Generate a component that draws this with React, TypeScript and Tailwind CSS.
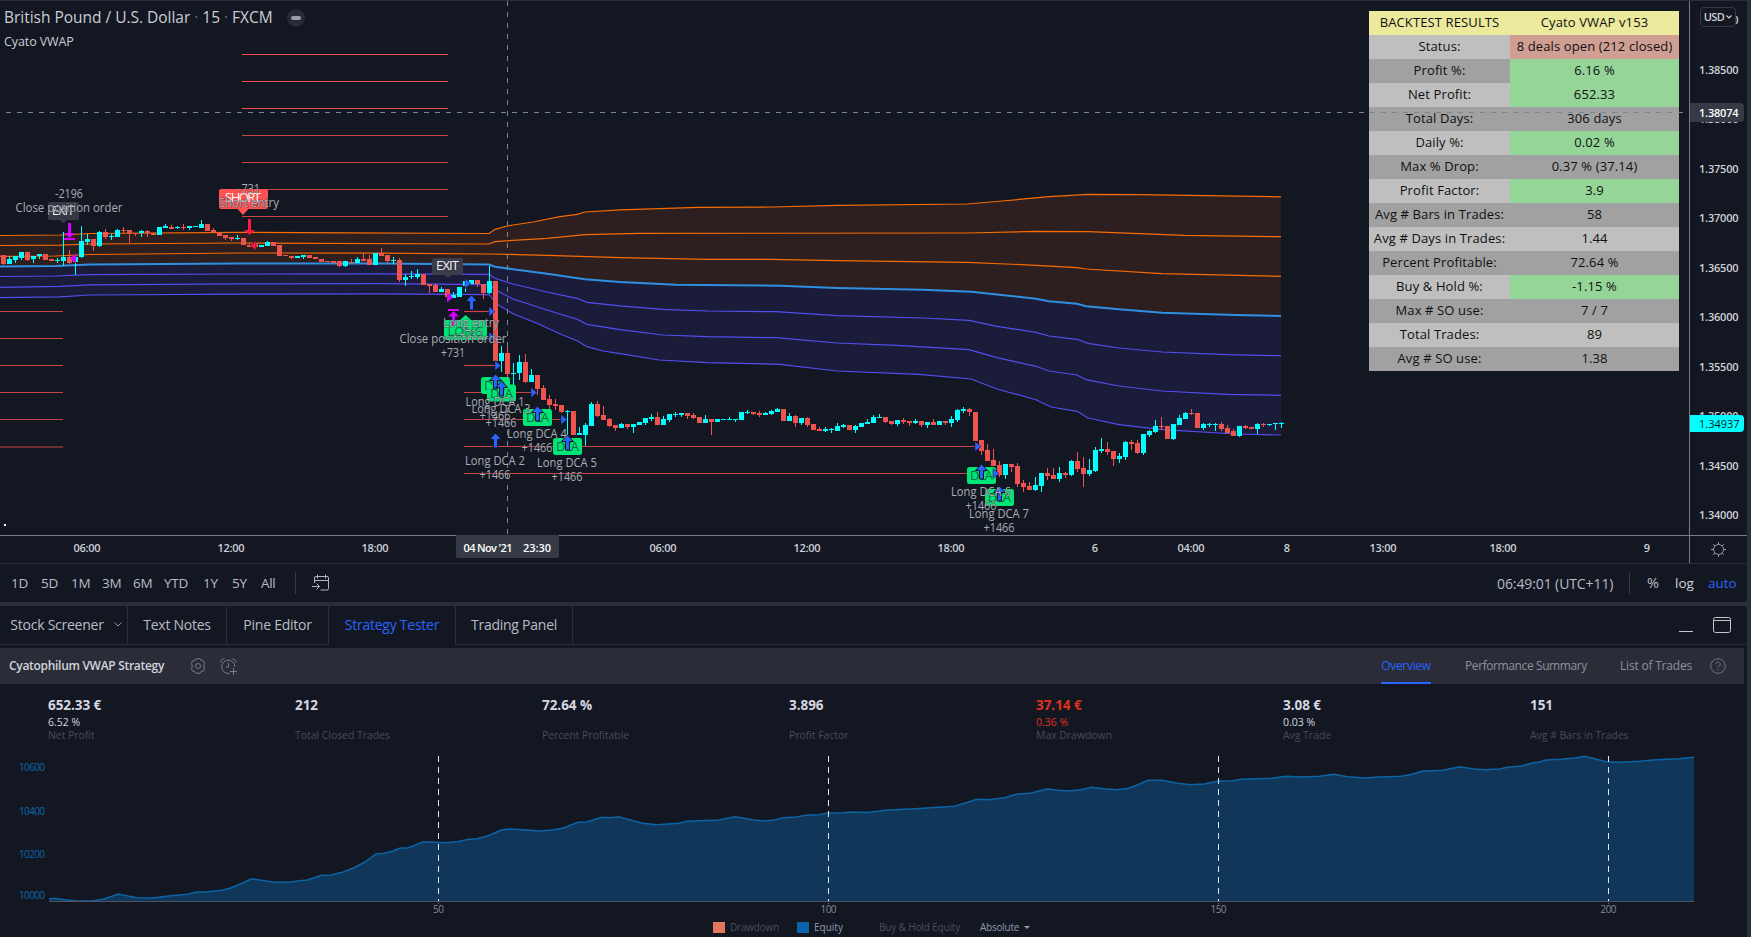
import type { ReactNode } from "react";
import clsx from "clsx";

type Point = [number, number];

/* One entry per 15m bar: direction, body top, body bottom, high, low (0 = same as the body) */
const CANDLES = `
r255,264,0,265 g259,264,256,0 g256,260,0,263 g252,258,0,260 r252,260,0,261 g256,259,0,263 g254,256,0,259 r254,260,0,0
r259,261,0,0 g260,261,258,263 g257,261,232,266 r257,263,250,264 g257,262,0,275 g241,257,226,258 g239,242,234,245 r239,246,0,251
g232,246,231,247 r232,237,229,239 g236,237,234,240 g230,237,229,0 r230,231,227,233 r230,233,0,243 r233,234,0,236 g231,233,230,237
r231,233,230,237 r233,235,0,0 g227,235,0,0 g226,228,224,0 r227,229,225,0 g227,228,226,229 r227,228,224,230 g226,228,0,230
g226,227,0,0 g224,228,220,0 r224,231,0,0 r230,232,228,0 r232,236,0,0 r235,238,0,240 r237,239,0,241 g238,239,235,240
r238,245,0,0 r245,247,243,0 r243,247,0,0 g245,247,0,0 g242,246,241,0 r242,246,0,0 r245,256,0,0 r255,256,0,0
r256,258,0,259 g256,258,0,0 g255,257,0,259 r255,258,0,0 r257,259,0,0 r259,262,0,0 r261,262,0,0 r261,263,0,0
r261,266,0,267 g261,266,0,267 r262,263,259,0 g259,263,257,0 r259,261,253,0 r259,265,255,0 g253,265,0,0 r253,256,248,0
r255,261,0,263 g260,261,257,264 r260,280,258,282 g277,280,274,286 g276,277,271,279 g274,277,269,279 r274,285,0,0 r284,286,0,293
r285,292,283,0 g289,292,287,0 r289,297,0,299 g295,298,292,0 g287,297,0,0 g281,286,0,292 g280,284,0,0 r280,284,0,287
r284,293,0,299 g281,293,266,294 r281,361,0,0 g353,361,346,372 r353,374,347,378 g373,374,363,385 g362,373,355,380 r362,382,354,383
g375,382,369,0 r375,389,0,395 r388,400,385,0 r399,405,395,417 r404,406,399,410 r405,412,0,413 g411,412,410,440 r411,435,0,0
g433,435,427,0 g425,435,423,446 g404,426,402,0 r404,416,401,417 r415,420,406,0 r419,426,418,427 r425,428,0,431 g424,428,423,0
r424,427,0,429 g424,427,0,433 g422,425,0,0 g418,423,0,425 g417,419,414,421 r417,425,412,0 g419,425,416,0 g414,420,0,422
g414,415,412,417 g413,415,0,417 r413,416,0,419 r415,418,413,419 r417,423,0,0 g419,423,415,0 r419,422,0,435 g419,422,0,0
g419,420,0,0 g419,420,417,0 g419,420,0,422 g412,420,0,0 g412,413,410,414 r412,414,0,415 r413,415,411,417 g413,415,412,0
g411,414,410,415 g409,412,408,0 r409,421,0,0 g416,421,413,0 r416,423,415,427 g418,423,0,425 r418,425,417,427 r424,430,0,0
r429,431,427,0 g429,431,427,432 g429,430,428,433 g426,431,423,0 g425,427,424,428 r425,430,0,0 g426,430,425,433 g423,427,0,0
g422,424,419,0 g417,423,415,0 g417,418,414,0 r417,422,0,423 r421,424,0,425 g420,424,0,426 r420,422,418,424 r421,423,0,426
g421,423,419,424 r421,425,0,427 g422,425,0,428 r422,425,419,0 g421,425,0,0 r421,423,0,425 g419,423,416,427 g410,420,409,422
g409,411,407,413 r409,412,408,416 r412,441,0,0 r440,451,0,455 r450,461,444,0 r460,466,449,0 r465,475,461,477 g464,475,0,479
r464,467,0,472 r466,484,463,487 r483,487,480,492 r486,490,482,0 g485,490,477,491 g473,486,0,492 r473,476,468,480 r475,479,468,0
g473,479,467,482 r473,475,472,478 g461,475,460,476 r461,469,452,472 r468,474,457,487 g470,474,459,476 g450,471,447,472 g449,451,438,453
r449,452,442,455 r451,459,0,466 g456,459,453,463 g442,457,441,460 r442,444,440,450 r443,453,440,454 g434,453,0,455 g431,435,430,437
g426,432,420,433 r426,427,417,430 r426,439,0,0 g424,439,0,440 g418,425,415,0 g413,419,412,0 r413,414,409,415 r413,428,0,0
g424,428,423,430 g424,425,423,427 g424,425,423,431 r424,429,422,431 r428,433,425,0 r431,436,429,0 g426,436,0,437 r426,428,425,429
r427,429,0,0 g424,429,423,434 r424,425,423,427 g424,425,0,426 g423,424,0,430 g423,424,422,428
`
  .trim()
  .split(/\s+/)
  .map((c) => {
    const [top, bottom, high, low] = c.slice(1).split(",").map(Number);
    return { up: c[0] === "g", top, bottom, high: high || top, low: low || bottom };
  });

const UPPER_3: Point[] = [[0, 235.5], [60, 235], [90, 233.5], [235, 232.3], [350, 232.8], [489, 233.5], [495, 229.3], [507, 226], [513, 225], [533, 222], [560, 216.7], [577, 214.3], [585, 212], [620, 209.8], [698, 207.4], [772, 207], [837, 205.3], [967, 204], [1002, 201], [1049, 196.7], [1088, 194.4], [1140, 194.6], [1281, 196.8]];
const UPPER_2: Point[] = [[0, 245.5], [60, 245.2], [90, 244], [240, 243], [489, 244], [495, 241.7], [513, 240.3], [547, 238.3], [585, 234.7], [640, 233.4], [967, 233], [1036, 231.4], [1088, 231.7], [1184, 235.3], [1281, 236.7]];
const UPPER_1: Point[] = [[0, 256.3], [55, 256], [90, 254.5], [240, 253], [380, 253.2], [489, 254], [547, 255.3], [620, 257.7], [707, 259.3], [772, 259.4], [837, 260.7], [967, 262.3], [1036, 265.3], [1077, 267.7], [1086, 269], [1162, 273.7], [1281, 276.3]];
const VWAP: Point[] = [[0, 266.4], [55, 266], [90, 264.5], [240, 263.5], [380, 263.4], [489, 264.6], [495, 266.7], [513, 269.3], [547, 273.7], [585, 279.3], [620, 282], [676, 284.7], [780, 285.7], [837, 288], [923, 289.7], [971, 291.7], [1036, 298.7], [1049, 301.3], [1077, 303.7], [1086, 306.3], [1119, 309.3], [1162, 312.7], [1236, 315], [1281, 316]];
const LOWER_1: Point[] = [[0, 276.5], [55, 276], [90, 274.6], [240, 274], [380, 273.8], [489, 274.4], [495, 278.3], [513, 284], [547, 292], [577, 298.3], [587, 302.3], [620, 305.8], [663, 309.3], [707, 311], [776, 311.7], [837, 315.7], [923, 318], [969, 320.3], [997, 326.3], [1036, 332.3], [1049, 336], [1077, 339.3], [1088, 343.3], [1119, 348], [1162, 352], [1227, 354.7], [1281, 355.7]];
const LOWER_2: Point[] = [[0, 287.3], [60, 286.3], [90, 284.8], [240, 283.8], [380, 283.6], [489, 284.7], [497, 290.7], [513, 299], [547, 310], [577, 319.3], [587, 324.3], [620, 329.7], [663, 335], [707, 336.7], [776, 337.7], [837, 343], [897, 345.3], [969, 349.7], [997, 357.7], [1036, 366.3], [1049, 371], [1077, 375], [1086, 379.7], [1119, 386], [1162, 391], [1227, 394.3], [1281, 395.3]];
const LOWER_3: Point[] = [[0, 297.6], [60, 296.8], [90, 295], [240, 294.2], [380, 293.8], [489, 294.7], [497, 304], [513, 313.7], [537, 323.3], [562, 334.7], [577, 340.7], [587, 346.7], [603, 351], [620, 353.7], [659, 360], [707, 362.7], [780, 364.3], [837, 371], [919, 374.3], [971, 379], [997, 389], [1036, 399.7], [1051, 407], [1077, 411.3], [1088, 418], [1119, 424.7], [1162, 429.7], [1236, 434], [1281, 435]];

/* Safety order levels: x1, x2, y */
const LEVELS: [number, number, number][] = [
  ...[54.5, 81.5, 108.5, 135.5, 162.5, 189.5, 216.5].map((y): [number, number, number] => [242, 448, y]),
  ...[311.5, 338.5, 365.5, 392.5, 419.5, 447].map((y): [number, number, number] => [0, 63, y]),
  [464, 490, 311.5], [464, 489, 338.5], [464, 496, 365.5], [464, 532, 392.5],
  [464, 562, 419.5], [464, 976, 446.5], [464, 994, 473.5],
];

const DCA_BOXES: Point[] = [[481, 377], [487, 384.5], [523, 409], [553, 438], [967, 467], [985, 489]];
const BUY_ARROWS: Point[] = [[471.5, 295], [495.5, 374], [501.5, 381], [495.5, 433], [537.5, 406], [567.5, 435], [981.5, 464], [999.5, 486]];
const FILLS: Point[] = [[465, 283.5], [489, 311.5], [489, 337], [495, 365.5], [531, 392.5], [561, 419.5], [975, 446.5], [993, 473.5]];

/* text, centre x, baseline, width */
const NOTES: [string, number, number, number][] = [
  ["-2196", 69, 198, 28], ["Close position order", 69, 212, 107],
  ["-731", 249, 193, 22], ["Short entry", 249, 207, 60],
  ["Long entry", 471, 327, 56], ["+732", 471, 339, 24],
  ["Close position order", 453, 343, 107], ["+731", 453, 357, 24],
  ["Long DCA 1", 495, 406, 59], ["+1466", 495, 420, 31],
  ["Long DCA 3", 501, 413, 59], ["+1466", 501, 427, 31],
  ["Long DCA 4", 537, 438, 60], ["+1466", 537, 452, 31],
  ["Long DCA 2", 495, 465, 60], ["+1466", 495, 479, 31],
  ["Long DCA 5", 567, 467, 60], ["+1466", 567, 481, 31],
  ["Long DCA 6", 981, 496, 60], ["+1466", 981, 510, 31],
  ["Long DCA 7", 999, 518, 60], ["+1466", 999, 532, 31],
];

const RESULTS: [string, string, string, string][] = [
  ["BACKTEST RESULTS", "Cyato VWAP v153", "bg-[#ebe99b]", "bg-[#ebe99b]"],
  ["Status:", "8 deals open (212 closed)", "bg-[#bfbfbf]", "bg-[#d09f94]"],
  ["Profit %:", "6.16 %", "bg-[#a1a1a1]", "bg-[#95d598]"],
  ["Net Profit:", "652.33", "bg-[#bfbfbf]", "bg-[#95d598]"],
  ["Total Days:", "306 days", "bg-[#a1a1a1]", "bg-[#a1a1a1]"],
  ["Daily %:", "0.02 %", "bg-[#bfbfbf]", "bg-[#95d598]"],
  ["Max % Drop:", "0.37 % (37.14)", "bg-[#a1a1a1]", "bg-[#a1a1a1]"],
  ["Profit Factor:", "3.9", "bg-[#bfbfbf]", "bg-[#95d598]"],
  ["Avg # Bars in Trades:", "58", "bg-[#a1a1a1]", "bg-[#a1a1a1]"],
  ["Avg # Days in Trades:", "1.44", "bg-[#bfbfbf]", "bg-[#bfbfbf]"],
  ["Percent Profitable:", "72.64 %", "bg-[#a1a1a1]", "bg-[#a1a1a1]"],
  ["Buy & Hold %:", "-1.15 %", "bg-[#bfbfbf]", "bg-[#95d598]"],
  ["Max # SO use:", "7 / 7", "bg-[#a1a1a1]", "bg-[#a1a1a1]"],
  ["Total Trades:", "89", "bg-[#bfbfbf]", "bg-[#bfbfbf]"],
  ["Avg # SO use:", "1.38", "bg-[#a1a1a1]", "bg-[#a1a1a1]"],
];

const PRICES = ["1.39000", "1.38500", "1.38000", "1.37500", "1.37000", "1.36500", "1.36000", "1.35500", "1.35000", "1.34500", "1.34000"];
const TIMES: [string, number][] = [["06:00", 87], ["12:00", 231], ["18:00", 375], ["06:00", 663], ["12:00", 807], ["18:00", 951], ["6", 1095], ["04:00", 1191], ["8", 1287], ["13:00", 1383], ["18:00", 1503], ["9", 1647]];

const RANGES: [string, string][] = [["1D", "w-[30px]"], ["5D", "w-[30px]"], ["1M", "w-[31px]"], ["3M", "w-[31px]"], ["6M", "w-[31px]"], ["YTD", "w-[39px]"], ["1Y", "w-[29px]"], ["5Y", "w-[29px]"], ["All", "w-[33px]"]];

const STATS = [
  { value: "652.33 €", sub: "6.52 %", label: "Net Profit" },
  { value: "212", label: "Total Closed Trades" },
  { value: "72.64 %", label: "Percent Profitable" },
  { value: "3.896", label: "Profit Factor" },
  { value: "37.14 €", sub: "0.36 %", label: "Max Drawdown", loss: true },
  { value: "3.08 €", sub: "0.03 %", label: "Avg Trade" },
  { value: "151", label: "Avg # Bars in Trades" },
];

/* Equity curve in panel coordinates, origin at the panel's top left */
const EQUITY: Point[] = [
  [49, 158.7], [55, 158.3], [64.5, 159.7], [76, 161], [92.6, 161], [104, 159], [112, 156.3], [118.5, 154], [128, 156], [137.5, 157.7], [150.4, 158], [159, 157.3], [168, 156], [188, 154.3], [196.5, 152], [205, 152], [221.7, 150.3], [230, 148.3], [241, 143.7], [251.5, 138.7], [264, 140.7], [275, 142.3], [289, 142.3], [297.5, 141], [307.5, 140], [321.6, 135.3], [331, 135], [342.4, 132.3], [353.6, 128], [365, 122], [376, 114], [384.4, 113.3], [393, 111], [399.6, 108.3], [408, 107.7], [415.3, 105], [422.6, 102], [432, 102], [446.2, 102.7], [457.4, 101.7], [468.6, 99.3], [477, 98.7], [488.3, 95.7], [501.2, 90], [509, 89], [527.6, 90], [538.8, 91], [552.8, 90], [564, 87.7], [578, 82.3], [586.5, 82], [601.6, 77.3], [610.6, 77.7], [618.5, 76.7], [631.4, 80.3], [642.6, 83.3], [656.6, 84.7], [679, 83.3], [687.5, 81.3], [718.4, 80], [735.2, 76.7], [752, 79.7], [763.3, 81], [774.5, 80], [783, 77.7], [797, 77], [805.4, 75.3], [819.4, 74.7], [828, 73], [842, 72.7], [853, 72], [867, 72.4], [880, 71], [884, 70.3], [915, 68.7], [954.3, 66.3], [965.5, 63], [976.8, 59.3], [988, 59.7], [1004.8, 57.7], [1016, 54.3], [1030, 53.3], [1047, 49], [1058.2, 50.3], [1069.5, 51], [1080.7, 49.7], [1092, 47.3], [1103.2, 48.7], [1117.2, 49.7], [1128.5, 48.3], [1139.7, 44], [1148, 40.3], [1162.2, 40.3], [1176.2, 43], [1190.3, 44.7], [1204.3, 44], [1218.4, 41], [1232.4, 40.7], [1241, 39.3], [1271.7, 38.3], [1285.8, 36.3], [1302.6, 37], [1319.5, 36.3], [1333.5, 34.3], [1347.6, 36.7], [1364.4, 38], [1378.5, 37], [1401, 36.3], [1412.2, 34.3], [1421.7, 31.3], [1443, 30.3], [1460, 26.7], [1474, 29], [1485.2, 29.7], [1499.3, 29], [1507.7, 27.3], [1521.8, 26], [1532, 23], [1538.6, 22.3], [1546, 20], [1561, 19.3], [1575, 18], [1584.7, 16.3], [1594.8, 18.7], [1606, 21.7], [1620, 22.3], [1639.8, 21.3], [1656.6, 19.7], [1679, 18.7], [1694, 17.3],
];

const line = (pts: Point[]) => "M" + pts.map((p) => p.join(" ")).join("L");
const area = (a: Point[], b: Point[]) => line([...a, ...[...b].reverse()]) + "Z";

function BuyArrow({ x, y }: { x: number; y: number }) {
  return <path d={`M${x} ${y}l6 6.500h-4v8.500h-4v-8.500h-4z`} fill="#2962ff" stroke="#131722" strokeWidth="1" />;
}

function PriceChart() {
  return (
    <svg width="1689" height="535" className="absolute left-0 top-0 block">
      <path d={area(UPPER_3, VWAP)} fill="#2d1f20" />
      <path d={area(VWAP, LOWER_3)} fill="#1a1c39" />
      {[UPPER_3, UPPER_2, UPPER_1].map((b, i) => <path key={i} d={line(b)} fill="none" stroke="#f56b04" strokeWidth="1.2" />)}
      {[LOWER_1, LOWER_2, LOWER_3].map((b, i) => <path key={i} d={line(b)} fill="none" stroke="#534ef0" strokeWidth="1.2" />)}
      <path d={line(VWAP)} fill="none" stroke="#2f8fe0" strokeWidth="2" />

      {/* Crosshair, vertical */}
      <path d="M507.5 1V535" stroke="#758696" strokeDasharray="5 6" />

      {CANDLES.map((c, i) => (
        <g key={i} fill={c.up ? "#00ffff" : "#ef5350"} shapeRendering="crispEdges">
          <rect x={3 + i * 6} y={c.high} width="1" height={c.low - c.high} />
          <rect x={1 + i * 6} y={c.top} width="5" height={c.bottom - c.top} />
        </g>
      ))}

      {LEVELS.map(([x1, x2, y], i) => <path key={i} d={`M${x1} ${y}H${x2}`} stroke={i < 3 ? "#f24e4e" : "#c94448"} strokeWidth="1.2" />)}

      {/* Short entry */}
      <rect x="219" y="189" width="49" height="20" rx="2" fill="#ff5252" />
      <path d="M237 208.500H249L243 215Z" fill="#ff5252" />
      <text x="243" y="202" fontSize="13" fontWeight="500" textAnchor="middle" textLength="36" fill="#fff">SHORT</text>
      <path d="M248 219h3v11h4l-5.500 5l-5.500-5h4z" fill="#ff1744" />
      <path d="M250 245.500l6-5v10z" fill="#ff1744" stroke="#131722" strokeWidth="0.5" />

      {/* Position exits */}
      <rect x="48" y="202" width="31" height="18" rx="2" fill="#363a45" />
      <path d="M59 219.500H68L63.500 223Z" fill="#363a45" />
      <text x="63" y="215" fontSize="12" textAnchor="middle" textLength="22" fill="#fff">EXIT</text>
      <path d="M68 223h3v10h4l-5.500 5l-5.500-5h4zM64 238h11v2h-11z" fill="#d500f9" />
      <path d="M70 258.500l6-5v10z" fill="#d500f9" />
      <rect x="432" y="258" width="31" height="17" rx="2" fill="#3b3c4a" />
      <path d="M443 274.500H452L447.500 278Z" fill="#3b3c4a" />
      <text x="447.500" y="270" fontSize="13" fontWeight="500" textAnchor="middle" textLength="23" fill="#f0f0f3">EXIT</text>
      <path d="M453 297.500l-6-5v10z" fill="#d500f9" />

      {/* Long entry */}
      <path d="M444 322a2 2 0 0 1 2-2h14l5.500-5l5.500 5h14a2 2 0 0 1 2 2v16a2 2 0 0 1-2 2h-39a2 2 0 0 1-2-2z" fill="#00e676" />
      <text x="465.500" y="335.500" fontSize="13" textAnchor="middle" textLength="36" fill="#0b7a4c">LONG</text>
      <path d="M448 309h11v2h-11zM453.500 311l5.500 5.500h-4v9.500h-3v-9.500h-4z" fill="#d500f9" />

      {DCA_BOXES.map(([x, y]) => (
        <g key={x}>
          <rect x={x} y={y} width="29" height="17" rx="2.500" fill="#00e676" />
          <text x={x + 14.5} y={y + 13} fontSize="13" textAnchor="middle" textLength="23" fill="#086b42">DCA</text>
        </g>
      ))}
      {FILLS.map(([x, y]) => <path key={`${x}-${y}`} d={`M${x} ${y - 5}v10l6-5z`} fill="#2962ff" stroke="#131722" strokeWidth="0.5" />)}
      {BUY_ARROWS.map(([x, y]) => <BuyArrow key={`${x}-${y}`} x={x} y={y} />)}

      {NOTES.map(([t, x, y, w], i) => (
        <text key={i} x={x} y={y} fontSize="12.500" fontWeight="500" textAnchor="middle" textLength={w} lengthAdjust="spacingAndGlyphs" fill="#abaeb6" stroke="#131722" strokeOpacity="0.45" strokeWidth="1.200" paintOrder="stroke">{t}</text>
      ))}
      <rect x="4" y="524" width="2" height="2" fill="#fff" />
    </svg>
  );
}

function ResultsTable() {
  return (
    <div className="absolute left-[1369px] top-[11px] w-[310px] text-[13px] leading-[22px] tracking-[0.12px] text-[#101010]">
      {RESULTS.map(([name, value, nameBg, valueBg]) => (
        <div key={name} className="flex h-6 text-center whitespace-nowrap">
          <div className={clsx("w-[141px]", nameBg)}>{name}</div>
          <div className={clsx("w-[169px]", valueBg)}>{value}</div>
        </div>
      ))}
    </div>
  );
}

function PriceAxis() {
  return (
    <div className="relative h-[535px] w-[58px] overflow-hidden border-l border-[#787b86] text-[11px] font-semibold text-[#cfd1d6]">
      <div className="-mt-[4.5px] flex flex-col pl-[9px]">
        {PRICES.map((p) => <div key={p} className="flex h-[49.5px] items-center tracking-[-0.2px]">{p}</div>)}
      </div>
      <div className="absolute left-[10px] top-[7px] flex h-5 w-9 items-center justify-center gap-[2px] rounded border border-[#363a45] bg-[#131722] text-[11px]">
        <span className="tracking-[-0.6px]">USD</span>
        <svg width="6" height="4" viewBox="0 0 6 4" fill="none" stroke="#d1d4dc" strokeWidth="1.2"><path d="M.5.500L3 3L5.500.500" /></svg>
      </div>
      <div className="absolute left-0 top-[103px] h-[19px] w-[54px] rounded-r-sm bg-[#363a45] pl-[9px] leading-[19px] tracking-[-0.2px] text-white">1.38074</div>
      <div className="absolute left-0 top-[415px] h-[17px] w-[54px] rounded-r-sm bg-[#00ffff] pl-[9px] font-normal leading-[17px] text-[#131722]">1.34937</div>
    </div>
  );
}

function TimeAxis() {
  return (
    <div className="flex h-[29px] border-y border-t-[#787b86] border-b-[#2a2e39]">
      <svg width="1689" height="27" className="block shrink-0 overflow-visible" fontSize="11" fontWeight="600" textAnchor="middle">
        {TIMES.map(([t, x]) => <text key={x} x={x} y="15.500" fill="#cfd1d6" textLength={t.length > 1 ? 27 : undefined}>{t}</text>)}
        <path d="M456 -1H559V20a2 2 0 0 1-2 2H458a2 2 0 0 1-2-2Z" fill="#363a45" />
        <text x="488" y="15.500" fill="#fff" textLength="49">04 Nov '21</text>
        <text x="537" y="15.500" fill="#fff" textLength="28">23:30</text>
      </svg>
      <div className="flex w-[58px] items-center justify-center border-l border-[#787b86]">
        <svg width="15" height="15" viewBox="0 0 15 15" fill="none" stroke="#9598a1">
          <circle cx="7.500" cy="7.500" r="5" />
          <path d="M7.500 0v2.500M7.500 12.500V15M0 7.500h2.500M12.500 7.500H15M2.200 2.200L4 4M11 11l1.800 1.800M12.800 2.200L11 4M4 11l-1.800 1.800" />
        </svg>
      </div>
    </div>
  );
}

function RangeBar() {
  return (
    <div className="flex h-[38px] items-center rounded-br bg-[#131722] pl-[11px] text-[13.5px] text-[#b9bcc4]">
      {RANGES.map(([r, w]) => <span key={r} className={clsx("tracking-[-0.3px]", w)}>{r}</span>)}
      <div className="ml-[1px] h-[22px] w-px bg-[#363a45]" />
      <svg width="18" height="18" viewBox="0 0 18 18" fill="none" stroke="#b2b5be" className="ml-4">
        <path d="M2.500 9V4a1.500 1.500 0 0 1 1.500-1.500h11A1.500 1.500 0 0 1 16.500 4v10.500A1.500 1.500 0 0 1 15 16H8.500M2.500 6.500h14M5.500.500v4M13.500.500v4M0 12.500h7.500M4.500 9.500l3 3l-3 3" />
      </svg>
      <div className="ml-auto flex items-center pr-[11px]">
        <span className="w-[132px] text-[14px] tracking-[-0.1px]">06:49:01 (UTC+11)</span>
        <div className="mr-[17px] h-[22px] w-px bg-[#363a45]" />
        <span className="w-[28px] text-[14.5px]">%</span>
        <span className="w-[33px] text-[#d1d4dc]">log</span>
        <span className="w-[28px] text-[#2962ff]">auto</span>
      </div>
    </div>
  );
}

function Tab({ children, width, active }: { children: ReactNode; width: string; active?: boolean }) {
  return (
    <div className={clsx("flex h-full items-center justify-center whitespace-nowrap border-r border-[#2a2e39] pb-[2px]", width, active ? "text-[#2962ff]" : "border-b text-[#b9bcc4]")}>
      {children}
    </div>
  );
}

function PanelTabs() {
  return (
    <div className="flex h-[39px] rounded-tr bg-[#131722] text-[14px] tracking-[-0.25px]">
      <Tab width="w-[128px]">
        <span className="ml-[5px]">Stock Screener</span>
        <svg width="8" height="5" viewBox="0 0 8 5" fill="none" stroke="#9598a1" className="ml-[10px]"><path d="M.500.500L4 4L7.500.500" /></svg>
      </Tab>
      <Tab width="w-[99px]">Text Notes</Tab>
      <Tab width="w-[102px]">Pine Editor</Tab>
      <Tab width="w-[127px]" active>Strategy Tester</Tab>
      <Tab width="w-[117px]">Trading Panel</Tab>
      <div className="flex flex-1 items-center justify-end border-b border-[#2a2e39] pr-[15px]">
        <svg width="54" height="18" viewBox="0 0 54 18" fill="none" stroke="#c3c5cb">
          <path d="M1 15.500H15" />
          <rect x="35.500" y="1.500" width="17" height="15" rx="2" />
          <path d="M35.500 4.500h17" />
        </svg>
      </div>
    </div>
  );
}

function StrategyBar() {
  return (
    <div className="mr-[3px] flex h-9 items-center bg-[#2a2d38] text-[12px] text-[#8b919e]">
      <span className="w-[182px] pl-[9px] font-semibold tracking-[-0.3px] text-[#d1d4dc]">Cyatophilum VWAP Strategy</span>
      <svg width="16" height="16" viewBox="0 0 16 16" fill="none" stroke="#787b86" className="ml-2">
        <path d="M5.800.8h4.400l1 1.700l2 .2l1.500 2.800l-.9 1.500v2l.9 1.500l-1.500 2.800l-2 .2l-1 1.700H5.800l-1-1.700l-2-.2l-1.500-2.800l.9-1.500V7l-.9-1.500l1.500-2.800l2-.2z" strokeLinejoin="round" />
        <circle cx="8" cy="8" r="2.500" />
      </svg>
      <svg width="17" height="17" viewBox="0 0 17 17" fill="none" stroke="#787b86" className="ml-[14px]">
        <path d="M9.500 15.300A6.600 6.600 0 1 1 14.800 9M8.500 5v4H6M.7 4.500A3.500 3.500 0 0 1 4.500.8M12 .8a3.500 3.500 0 0 1 3.800 3.700M10 13.500h7M13.500 10v7" />
      </svg>
      <div className="ml-auto flex h-full items-center">
        <div className="mr-[34px] flex h-full w-[50px] items-center justify-center border-b-2 border-[#2962ff] pt-[2px] tracking-[-0.3px] text-[#2962ff]">Overview</div>
        <div className="mr-[34px] w-[121px] text-center tracking-[-0.4px] whitespace-nowrap">Performance Summary</div>
        <div className="mr-[18px] w-[72px] text-center tracking-[-0.2px] whitespace-nowrap">List of Trades</div>
        <svg width="16" height="16" viewBox="0 0 16 16" fill="none" stroke="#70747f" className="mr-[18px]">
          <circle cx="8" cy="8" r="7.300" />
          <path d="M5.800 6.300a2.200 2.200 0 1 1 3.300 1.900C8.200 8.700 8 9 8 9.900M8 11.200v1.300" />
        </svg>
      </div>
    </div>
  );
}

function EquityChart() {
  return (
    <div>
      <svg width="1747" height="177" className="block">
        <path d={`${line(EQUITY)}V161.500H49Z`} fill="#10375a" />
        <path d={line(EQUITY)} fill="none" stroke="#0c63a6" strokeWidth="1.500" />
        <path d="M49 161.500H1694" stroke="#50535e" />
        {[438.5, 828.5, 1218.5, 1608.5].map((x, i) => (
          <g key={x}>
            <path d={`M${x} 16V161`} stroke="#e4eaf0" strokeDasharray="6 5" />
            <path d={`M${x} 162V164`} stroke="#50535e" />
            <text x={x} y="173" fontSize="10" textAnchor="middle" textLength={i ? 16 : 11} fill="#868993">{(i + 1) * 50}</text>
          </g>
        ))}
        {([["10600", 31], ["10400", 75], ["10200", 118], ["10000", 159]] as [string, number][]).map(([t, y]) => (
          <text key={t} x="45" y={y} fontSize="10" textAnchor="end" textLength="26" fill="#0c67ab">{t}</text>
        ))}
      </svg>
      <div className="flex h-5 items-center pl-[713px] text-[10px] text-[#4a4e59]">
        <div className="mr-[5px] h-[11px] w-3 bg-[#e2775d]" />
        <span className="w-[67px] tracking-[-0.2px]">Drawdown</span>
        <div className="mr-[5px] h-[11px] w-3 bg-[#0c63a9]" />
        <span className="w-[65px] text-[#8e9bb0]">Equity</span>
        <span className="w-[101px] tracking-[-0.15px]">Buy &amp; Hold Equity</span>
        <span className="w-[44px] tracking-[-0.25px] text-[#8e9bb0]">Absolute</span>
        <svg width="6" height="3" viewBox="0 0 6 3" fill="#8e9bb0"><path d="M0 0H6L3 3Z" /></svg>
      </div>
    </div>
  );
}

export default function App() {
  return (
    <div className="h-[937px] w-[1751px] overflow-hidden bg-[#2a2e39] font-['Open_Sans',sans-serif]">
      <div className="w-[1747px]">
        {/* Chart */}
        <div className="relative flex h-[535px] bg-[#131722]">
          <div className="relative w-[1689px]">
            <PriceChart />
            <div className="relative flex h-[35px] items-center gap-[19px] pl-1">
              <span className="w-[268px] whitespace-nowrap text-[15.5px] tracking-[-0.02px] text-[#cbcdd2]">British Pound / U.S. Dollar <span className="text-[#6a6d78]">·</span> 15 <span className="text-[#6a6d78]">·</span> FXCM</span>
              <div className="-ml-[4px] flex size-[18px] items-center justify-center rounded-full bg-[#282b36]">
                <div className="h-1 w-[10px] rounded-full bg-[#9a9ca8]" />
              </div>
            </div>
            <div className="relative pl-1 text-[12.5px] leading-[13px] tracking-[-0.1px] text-[#cbcdd2]">Cyato VWAP</div>
            <ResultsTable />
            <svg width="1683" height="1" className="absolute left-0 top-[112px]"><path d="M6 .500H1683" stroke="#758696" strokeDasharray="5 6" /></svg>
          </div>
          <PriceAxis />
          <div className="absolute left-0 top-0 h-px w-full bg-[#2a2e39]" />
        </div>
        <div className="bg-[#131722]"><TimeAxis /></div>
        <RangeBar />

        {/* Bottom panel */}
        <div className="mt-1 h-[331px] rounded-tr bg-[#131722]">
          <PanelTabs />
          <div className="h-[3px]" />
          <StrategyBar />
          <div className="flex h-14 pl-12 pt-[11px]">
            {STATS.map((s) => (
              <div key={s.label} className={clsx("flex w-[247px] shrink-0 flex-col", s.loss ? "text-[#e0301e]" : "text-[#d5d8e0]")}>
                <div className="h-5 shrink-0 text-[13.5px] font-bold leading-5 tracking-[-0.05px]">{s.value}</div>
                <div className="h-[14px] shrink-0 text-[10.500px] font-medium leading-[14px]">{s.sub}</div>
                <div className="shrink-0 text-[10.500px] leading-[13px] tracking-[-0.05px] text-[#484c57]">{s.label}</div>
              </div>
            ))}
          </div>
          <EquityChart />
        </div>
      </div>
    </div>
  );
}
